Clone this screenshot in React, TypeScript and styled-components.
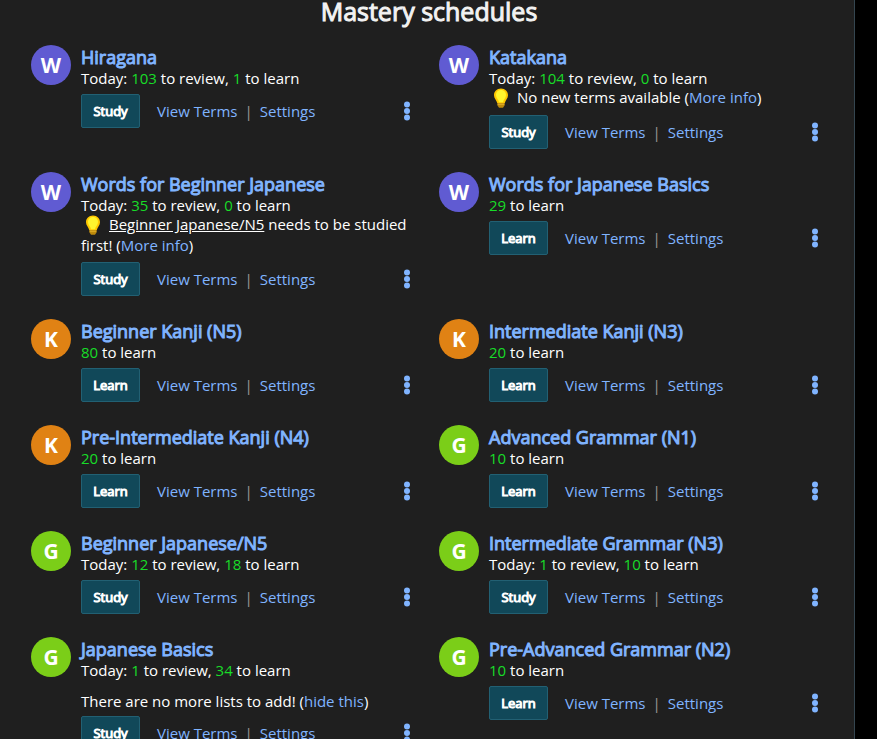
import React from "react";
import styled, { createGlobalStyle } from "styled-components";

const GlobalStyle = createGlobalStyle`
  * { box-sizing: border-box; }
  body {
    margin: 0;
    background: #000;
    color: #fff;
    font: 15px/20px "Open Sans", "Noto Sans", sans-serif;
    overflow: hidden;
  }
`;

const Panel = styled.main`
  height: 100vh;
  margin-right: 22px;
  padding: 0 7px 0 31px;
  overflow: hidden;
  background: #1f1f1f;
  border-right: 1px solid #34454f;
`;

const PageTitle = styled.h1`
  margin: 0 20px 23px 0;
  font-size: 25px;
  line-height: 22px;
  font-weight: 400;
  text-align: center;
  color: #f2f2f2;
  -webkit-text-stroke: 1px currentColor;
`;

const ScheduleGrid = styled.div`
  display: grid;
  grid-template-columns: 1fr 1fr;
  row-gap: 23px;
`;

const Card = styled.article`
  display: grid;
  grid-template-columns: 40px minmax(0, 1fr);
  column-gap: 10px;
  align-items: start;
  padding-right: 28px;
`;

const Avatar = styled.div<{ $color: string }>`
  display: grid;
  place-items: center;
  height: 40px;
  border-radius: 50%;
  background: ${(p) => p.$color};
  font-size: 21px;
  font-weight: 700;
`;

const Name = styled.h2`
  margin: 0;
  font-size: 18px;
  line-height: 24px;
  font-weight: 400;
  -webkit-text-stroke: 1px #80b4ff;
`;

const Link = styled.a`
  color: #80b4ff;
  text-decoration: none;
`;

const Summary = styled.p`
  margin: 0;
  line-height: 18px;
`;

const Count = styled.span`
  color: #18dc28;
`;

const Hint = styled.p<{ $spaced?: boolean }>`
  margin: ${(p) => (p.$spaced ? "14px 0 1px" : "0 0 1px")};
  line-height: ${(p) => (p.$spaced ? "16px" : "20px")};
`;

const Bulb = styled.svg`
  width: 16px;
  height: 20px;
  margin: 0 8px 0 4px;
  vertical-align: -5px;
`;

const Underlined = styled.a`
  color: inherit;
  text-decoration: underline;
`;

const Actions = styled.div`
  display: flex;
  align-items: center;
  margin-top: 7px;
`;

const ActionButton = styled.button`
  width: 59px;
  height: 34px;
  margin-right: 17px;
  padding: 0;
  border: 1px solid #226073;
  border-radius: 2px;
  background: #114859;
  color: #fff;
  font: 400 13px/20px "Open Sans", "Noto Sans", sans-serif;
  -webkit-text-stroke: 1px #fff;
`;

const Divider = styled.span`
  margin: 0 7px;
  color: #999;
`;

const MenuButton = styled.button`
  display: grid;
  place-items: center;
  width: 8px;
  height: 20px;
  margin-left: auto;
  padding: 0;
  border: 0;
  background: none;
  color: #80b4ff;
`;

const COLORS: Record<string, string> = { W: "#605bd2", K: "#e08214", G: "#7bce18" };

type Schedule = {
  kind: string;
  name: string;
  review?: number;
  learn: number;
  hint?: "noTerms" | "prerequisite" | "noLists";
};

const schedules: Schedule[] = [
  { kind: "W", name: "Hiragana", review: 103, learn: 1 },
  { kind: "W", name: "Katakana", review: 104, learn: 0, hint: "noTerms" },
  { kind: "W", name: "Words for Beginner Japanese", review: 35, learn: 0, hint: "prerequisite" },
  { kind: "W", name: "Words for Japanese Basics", learn: 29 },
  { kind: "K", name: "Beginner Kanji (N5)", learn: 80 },
  { kind: "K", name: "Intermediate Kanji (N3)", learn: 20 },
  { kind: "K", name: "Pre-Intermediate Kanji (N4)", learn: 20 },
  { kind: "G", name: "Advanced Grammar (N1)", learn: 10 },
  { kind: "G", name: "Beginner Japanese/N5", review: 12, learn: 18 },
  { kind: "G", name: "Intermediate Grammar (N3)", review: 1, learn: 10 },
  { kind: "G", name: "Japanese Basics", review: 1, learn: 34, hint: "noLists" },
  { kind: "G", name: "Pre-Advanced Grammar (N2)", learn: 10 },
];

const LightBulb = () => (
  <Bulb viewBox="0 0 16 20" aria-hidden="true">
    <path d="M8 0.5C3.8 0.5 1 3.5 1 7.2c0 3.2 2.6 5 3.3 8.1h7.4C12.4 12.2 15 10.4 15 7.2 15 3.5 12.2 0.5 8 0.5Z" fill="#ffc800" />
    <path d="M8 2C4.8 2 3 4.3 3 7c0 2.8 2.5 4.5 3 7.3h4C10.5 11.5 13 9.8 13 7c0-2.7-1.8-5-5-5Z" fill="#fff52e" />
    <path d="M4.5 15h7v2.5L10 19.7H6l-1.5-2.2Z" fill="#bd8a0c" />
    <path d="M4.5 16.2h7" stroke="#e8b52c" />
  </Bulb>
);

const HintText = ({ hint }: { hint: Schedule["hint"] }) => {
  if (hint === "noTerms")
    return <Hint><LightBulb />No new terms available (<Link href="#info">More info</Link>)</Hint>;
  if (hint === "prerequisite")
    return (
      <Hint>
        <LightBulb /><Underlined href="#n5">Beginner Japanese/N5</Underlined> needs to be studied first! (
        <Link href="#info">More info</Link>)
      </Hint>
    );
  if (hint === "noLists")
    return <Hint $spaced>There are no more lists to add! (<Link href="#hide">hide this</Link>)</Hint>;
  return null;
};

const ScheduleCard = ({ item }: { item: Schedule }) => (
  <Card>
    <Avatar $color={COLORS[item.kind]}>{item.kind}</Avatar>
    <div>
      <Name><Link href="#schedule">{item.name}</Link></Name>
      <Summary>
        {item.review !== undefined && <>Today: <Count>{item.review}</Count> to review, </>}
        <Count>{item.learn}</Count> to learn
      </Summary>
      <HintText hint={item.hint} />
      <Actions>
        <ActionButton type="button">{item.review !== undefined ? "Study" : "Learn"}</ActionButton>
        <Link href="#terms">View Terms</Link>
        <Divider>|</Divider>
        <Link href="#settings">Settings</Link>
        <MenuButton type="button" aria-label={`More options for ${item.name}`}>
          <svg width="8" height="20" viewBox="0 0 8 20" fill="currentColor" aria-hidden="true">
            <circle cx="4" cy="3.5" r="3" />
            <circle cx="4" cy="10" r="3" />
            <circle cx="4" cy="16.5" r="3" />
          </svg>
        </MenuButton>
      </Actions>
    </div>
  </Card>
);

const App = () => (
  <>
    <GlobalStyle />
    <Panel>
      <PageTitle>Mastery schedules</PageTitle>
      <ScheduleGrid>
        {schedules.map((item) => <ScheduleCard key={item.name} item={item} />)}
      </ScheduleGrid>
    </Panel>
  </>
);

export default App;
